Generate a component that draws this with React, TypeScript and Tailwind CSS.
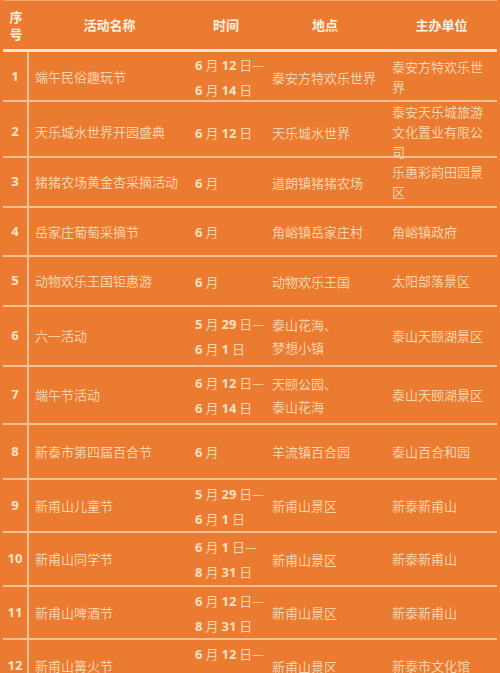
import React from "react";

type Row = {
  n: string;
  h: string;
  name: string;
  time: string[];
  place: string[];
  org: string[];
};

const rows: Row[] = [
  { n: "1", h: "h-[50px]", name: "端午民俗趣玩节", time: ["6|月|12|日—", "6|月|14|日"], place: ["泰安方特欢乐世界"], org: ["泰安方特欢乐世", "界"] },
  { n: "2", h: "h-[56px]", name: "天乐城水世界开园盛典", time: ["6|月|12|日"], place: ["天乐城水世界"], org: ["泰安天乐城旅游", "文化置业有限公", "司"] },
  { n: "3", h: "h-[50px]", name: "猪猪农场黄金杏采摘活动", time: ["6|月"], place: ["道朗镇猪猪农场"], org: ["乐惠彩韵田园景", "区"] },
  { n: "4", h: "h-[49px]", name: "岳家庄葡萄采摘节", time: ["6|月"], place: ["角峪镇岳家庄村"], org: ["角峪镇政府"] },
  { n: "5", h: "h-[50px]", name: "动物欢乐王国钜惠游", time: ["6|月"], place: ["动物欢乐王国"], org: ["太阳部落景区"] },
  { n: "6", h: "h-[60px]", name: "六一活动", time: ["5|月|29|日—", "6|月|1|日"], place: ["泰山花海、", "梦想小镇"], org: ["泰山天颐湖景区"] },
  { n: "7", h: "h-[58px]", name: "端午节活动", time: ["6|月|12|日—", "6|月|14|日"], place: ["天颐公园、", "泰山花海"], org: ["泰山天颐湖景区"] },
  { n: "8", h: "h-[55px]", name: "新泰市第四届百合节", time: ["6|月"], place: ["羊流镇百合园"], org: ["泰山百合和园"] },
  { n: "9", h: "h-[53px]", name: "新甫山儿童节", time: ["5|月|29|日—", "6|月|1|日"], place: ["新甫山景区"], org: ["新泰新甫山"] },
  { n: "10", h: "h-[54px]", name: "新甫山同学节", time: ["6|月|1|日—", "8|月|31|日"], place: ["新甫山景区"], org: ["新泰新甫山"] },
  { n: "11", h: "h-[53px]", name: "新甫山啤酒节", time: ["6|月|12|日—", "8|月|31|日"], place: ["新甫山景区"], org: ["新泰新甫山"] },
  { n: "12", h: "h-[54px]", name: "新甫山篝火节", time: ["6|月|12|日—", "8|月|31|日"], place: ["新甫山景区"], org: ["新泰市文化馆"] },
];

const cjk = { fontFamily: '"Noto Sans CJK SC", "Noto Sans", sans-serif' };
const num = { fontFamily: '"Open Sans", "Liberation Sans", "Noto Sans CJK SC", sans-serif' };

function TimeLine({ s }: { s: string }) {
  const parts = s.split("|");
  return (
    <div className="whitespace-nowrap">
      {parts.map((p, i) =>
        /^\d+$/.test(p) ? (
          <span key={i} style={num} className="font-bold text-[13px] text-[#fde0bf]">
            {p}
          </span>
        ) : (
          <span key={i} style={cjk} className="text-[13px] mx-[3px]">
            {p}
          </span>
        )
      )}
    </div>
  );
}

export default function App() {
  return (
    <div className="min-h-screen w-[500px] bg-[#eb7b30] text-[#f8d3ad] overflow-hidden" style={cjk}>
      <div className="mx-[3px] border-t border-[#f3a46a]">
        {/* header */}
        <div className="grid grid-cols-[26px_161px_72px_126px_1fr] h-[51px] border-b-[3px] border-[#fde6cc] text-[#fff1e2] font-bold text-[13px]">
          <div className="flex flex-col items-center justify-center leading-[17px] text-[13px]">
            <span>序</span>
            <span>号</span>
          </div>
          <div className="flex items-center justify-center">活动名称</div>
          <div className="flex items-center justify-center">时间</div>
          <div className="flex items-center justify-center">地点</div>
          <div className="flex items-center justify-center pr-[2px]">主办单位</div>
        </div>
        {rows.map((r) => (
          <div
            key={r.n}
            className={`grid grid-cols-[26px_161px_72px_126px_1fr] border-b-2 border-[#f6c194] ${r.h}`}
          >
            <div
              style={num}
              className="flex items-center justify-center border-r-2 border-[#f6c194] font-bold text-[13px] text-[#fde2c2]"
            >
              {r.n}
            </div>
            <div className="flex items-center pl-[6px] text-[13px] whitespace-nowrap">{r.name}</div>
            <div className="flex flex-col justify-center pl-[5px] leading-[23px]">
              {r.time.map((t, i) => (
                <TimeLine key={i} s={t} />
              ))}
            </div>
            <div className="flex flex-col justify-center pl-[10px] text-[13px] leading-[23px]">
              {r.place.map((p, i) => (
                <div key={i} className="whitespace-nowrap">{p}</div>
              ))}
            </div>
            <div className="flex flex-col justify-center pl-[4px] text-[13px] leading-[20px]">
              {r.org.map((p, i) => (
                <div key={i} className="whitespace-nowrap">{p}</div>
              ))}
            </div>
          </div>
        ))}
      </div>
    </div>
  );
}
